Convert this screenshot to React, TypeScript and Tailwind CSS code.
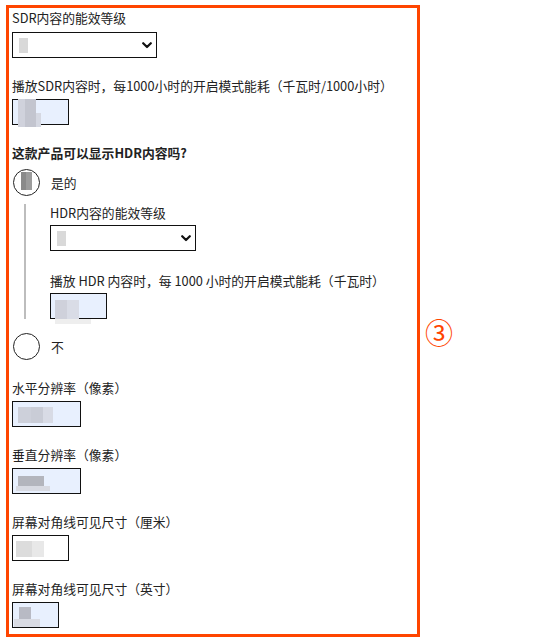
import React from "react";

const font = { fontFamily: '"Noto Sans CJK SC", "Noto Sans", sans-serif' };

function Chevron() {
  return (
    <svg width="10" height="7" viewBox="0 0 10 7" className="shrink-0">
      <path d="M1.2 1.2 L5 5 L8.8 1.2" fill="none" stroke="#111" strokeWidth="2.2" strokeLinecap="round" strokeLinejoin="round" />
    </svg>
  );
}

function Select({ width }: { width: string }) {
  return (
    <div className={`${width} h-[26px] border border-[#111] bg-white flex items-center justify-between pl-[6px] pr-[4px]`}>
      <div className="w-[9px] h-[15px] bg-[#d9d9d9] blur-[0.5px]" />
      <Chevron />
    </div>
  );
}

function Input({ width, blue = true, blocks }: { width: string; blue?: boolean; blocks: React.ReactNode }) {
  return (
    <div className={`${width} h-[26px] border border-[#111] ${blue ? "bg-[#e8f0fe]" : "bg-white"} relative overflow-visible`}>
      {blocks}
    </div>
  );
}

function Label({ children, bold = false }: { children: React.ReactNode; bold?: boolean }) {
  return <div className={`text-[12.8px] leading-[18px] text-[#222] ${bold ? "font-bold" : ""}`}>{children}</div>;
}

export default function App() {
  return (
    <div className="w-[548px] h-[638px] bg-white flex items-start pt-[5px] pl-[6px]" style={font}>
      <div className="w-[414px] h-[632px] border-[3px] border-[#ff4500] pl-[3px] pt-[1px] flex flex-col">
        <Label>SDR内容的能效等级</Label>
        <div className="mt-[5px]">
          <Select width="w-[145px]" />
        </div>

        <div className="mt-[19px]">
          <Label>播放SDR内容时，每1000小时的开启模式能耗（千瓦时/1000小时）</Label>
        </div>
        <div className="mt-[4px]">
          <Input
            width="w-[57px]"
            blocks={
              <>
                <div className="absolute left-[5px] top-[-1px] w-[7px] h-[28px] bg-[#d0d2dc] blur-[0.5px]" />
                <div className="absolute left-[12px] top-[-1px] w-[11px] h-[28px] bg-[#c3c5cf] blur-[0.5px]" />
                <div className="absolute left-[23px] top-[13px] w-[5px] h-[14px] bg-[#d5d8e2] blur-[0.5px]" />
              </>
            }
          />
        </div>

        <div className="mt-[19px]">
          <Label bold>这款产品可以显示HDR内容吗?</Label>
        </div>

        <div className="mt-[7px] flex items-center">
          <div className="ml-[1px] w-[27px] h-[27px] rounded-full border border-[#222] bg-white relative overflow-hidden">
            <div className="absolute left-[7px] top-[2px] w-[11px] h-[18px] bg-[#8a8a8a] blur-[0.6px]" />
            <div className="absolute left-[12px] top-[2px] w-[6px] h-[18px] bg-[#9c9c9c] blur-[0.6px]" />
          </div>
          <span className="ml-[11px] text-[12.8px] leading-[18px] text-[#222]">是的</span>
        </div>

        <div className="mt-[8px] ml-[12px] border-l-2 border-[#bdbdbd] pl-[24px] flex flex-col">
          <Label>HDR内容的能效等级</Label>
          <div className="mt-[3px]">
            <Select width="w-[146px]" />
          </div>
          <div className="mt-[21px]">
            <Label>播放 HDR 内容时，每 1000 小时的开启模式能耗（千瓦时）</Label>
          </div>
          <div className="mt-[3px]">
            <Input
              width="w-[57px]"
              blocks={
                <>
                  <div className="absolute left-[4px] top-[6px] w-[12px] h-[22px] bg-[#cfd1db] blur-[0.5px]" />
                  <div className="absolute left-[16px] top-[6px] w-[12px] h-[22px] bg-[#d9dce6] blur-[0.5px]" />
                  <div className="absolute left-[4px] top-[25px] w-[36px] h-[5px] bg-[#eeeeee] blur-[0.5px]" />
                </>
              }
            />
          </div>
        </div>

        <div className="mt-[14px] flex items-center">
          <div className="ml-[1px] w-[27px] h-[27px] rounded-full border border-[#222] bg-white" />
          <span className="ml-[11px] text-[12.8px] leading-[18px] text-[#222]">不</span>
        </div>

        <div className="mt-[19px]">
          <Label>水平分辨率（像素）</Label>
        </div>
        <div className="mt-[4px]">
          <Input
            width="w-[69px]"
            blocks={
              <>
                <div className="absolute left-[5px] top-[5px] w-[13px] h-[16px] bg-[#cdd0da] blur-[0.5px]" />
                <div className="absolute left-[18px] top-[5px] w-[12px] h-[16px] bg-[#c9ccd6] blur-[0.5px]" />
                <div className="absolute left-[30px] top-[5px] w-[10px] h-[16px] bg-[#d8dbe5] blur-[0.5px]" />
              </>
            }
          />
        </div>

        <div className="mt-[19px]">
          <Label>垂直分辨率（像素）</Label>
        </div>
        <div className="mt-[4px]">
          <Input
            width="w-[69px]"
            blocks={
              <>
                <div className="absolute left-[5px] top-[7px] w-[26px] h-[11px] bg-[#b3b5bd] blur-[0.5px]" />
                <div className="absolute left-[3px] top-[17px] w-[34px] h-[5px] bg-[#d8dae2] blur-[0.5px]" />
              </>
            }
          />
        </div>

        <div className="mt-[19px]">
          <Label>屏幕对角线可见尺寸（厘米）</Label>
        </div>
        <div className="mt-[4px]">
          <Input
            width="w-[57px]"
            blue={false}
            blocks={
              <>
                <div className="absolute left-[3px] top-[5px] w-[16px] h-[16px] bg-[#dcdcdc] blur-[0.5px]" />
                <div className="absolute left-[19px] top-[5px] w-[12px] h-[16px] bg-[#e8e8e8] blur-[0.5px]" />
              </>
            }
          />
        </div>

        <div className="mt-[19px]">
          <Label>屏幕对角线可见尺寸（英寸）</Label>
        </div>
        <div className="mt-[4px]">
          <Input
            width="w-[47px]"
            blocks={
              <>
                <div className="absolute left-[6px] top-[4px] w-[12px] h-[14px] bg-[#b8bac4] blur-[0.5px]" />
                <div className="absolute left-[1px] top-[16px] w-[26px] h-[8px] bg-[#d9dbe3] blur-[0.5px]" />
              </>
            }
          />
        </div>
      </div>
      <div className="ml-[5px] mt-[311px] text-[28px] leading-[32px] text-[#ff4500]" style={{ fontFamily: '"Noto Sans CJK SC", "DejaVu Sans", sans-serif' }}>
        ③
      </div>
    </div>
  );
}
